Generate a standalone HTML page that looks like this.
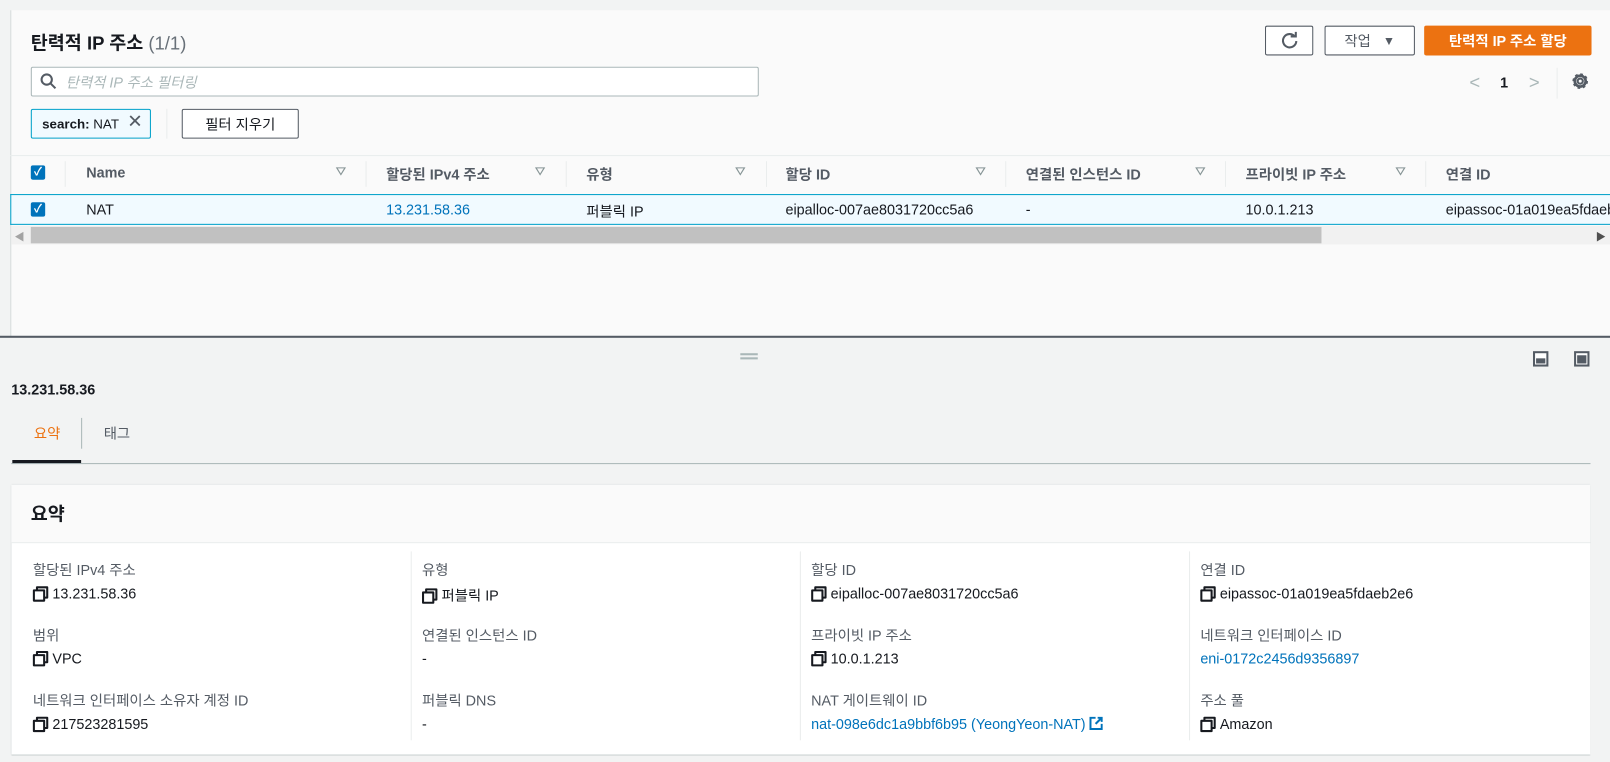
<!DOCTYPE html>
<html><head><meta charset="utf-8"><style>
*{box-sizing:border-box;margin:0;padding:0}
body{width:1610px;height:762px;background:#f2f3f3;font-family:"Liberation Sans","Noto Sans CJK KR",sans-serif;font-size:14px;color:#16191f;position:relative;overflow:hidden}
#w{position:absolute;left:0;top:0;width:1568px;height:742px;transform:scale(1.02679);transform-origin:0 0}
.a{position:absolute;white-space:nowrap}
.top{position:absolute;left:10px;top:10px;width:1558px;height:318px;background:#fafafa;border-left:1px solid #d5dbdb}
.btn{position:absolute;border:1px solid #545b64;border-radius:2px;background:#fff;font-size:14px;display:flex;align-items:center;justify-content:center;color:#545b64}
.hd{position:absolute;top:160px;font-weight:bold;color:#545b64;font-size:14px}
.sep{position:absolute;top:157px;width:1px;height:25px;background:#eaeded}
.tri{position:absolute;top:163px;width:0;height:0;border-left:5px solid transparent;border-right:5px solid transparent;border-top:8px solid #879596}
.tri:after{content:"";position:absolute;left:-3px;top:-7px;border-left:3px solid transparent;border-right:3px solid transparent;border-top:5px solid #fafafa}
.cb{position:absolute;width:14px;height:14px;background:#0073bb;border-radius:2px;color:#fff;font-size:11px;line-height:14px;text-align:center;font-weight:bold}
.lbl{position:absolute;color:#545b64;font-size:14px}
.val{position:absolute;font-size:14px;color:#16191f}
.lnk{color:#0073bb}
.cp{display:inline-block;width:13px;height:13px;position:relative;vertical-align:-1px;margin-right:6px}
.cp:before{content:"";position:absolute;left:3px;top:0;width:8px;height:8px;border:2px solid #16191f;border-radius:1px}
.cp:after{content:"";position:absolute;left:0;top:3px;width:8px;height:8px;border:2px solid #16191f;background:#fff;border-radius:1px}
</style></head><body><div id="w">
<div class="top"></div>
<div class="a" style="left:30px;top:28px;font-size:18px;font-weight:bold">탄력적 IP 주소 <span style="font-weight:normal;color:#687078">(1/1)</span></div>
<div class="btn" style="left:1232px;top:25px;width:47px;height:29px"><svg width="18" height="18" viewBox="0 0 18 18"><path d="M14 4.5A6.5 6.5 0 1 0 15.5 9" fill="none" stroke="#545b64" stroke-width="2"/><path d="M10 4.5h5v-5" fill="none" stroke="#545b64" stroke-width="2"/></svg></div>
<div class="btn" style="left:1290px;top:25px;width:88px;height:29px">작업&nbsp;&nbsp;&nbsp;<span style="font-size:12px;color:#545b64">▼</span></div>
<div class="btn" style="left:1387px;top:25px;width:163px;height:29px;background:#ec7211;border-color:#ec7211;color:#fff;font-weight:bold">탄력적 IP 주소 할당</div>
<div class="a" style="left:30px;top:65px;width:709px;height:29px;border:1px solid #aab7b8;background:#fff;border-radius:2px"></div>
<svg class="a" style="left:39px;top:71px" width="16" height="16" viewBox="0 0 16 16"><circle cx="6.5" cy="6.5" r="5" fill="none" stroke="#545b64" stroke-width="2"/><path d="M10 10l5 5" stroke="#545b64" stroke-width="2"/></svg>
<div class="a" style="left:64px;top:70px;color:#aab7b8;font-style:italic">탄력적 IP 주소 필터링</div>
<div class="a" style="left:1431px;top:70px;color:#aab7b8;font-size:18px">&lt;</div>
<div class="a" style="left:1461px;top:72px;font-weight:bold">1</div>
<div class="a" style="left:1489px;top:70px;color:#aab7b8;font-size:18px">&gt;</div>
<div class="a" style="left:1516px;top:66px;width:1px;height:30px;background:#eaeded"></div>
<svg class="a" style="left:1531px;top:71px" width="16" height="16" viewBox="0 0 16 16"><circle cx="8" cy="8" r="2.5" fill="none" stroke="#545b64" stroke-width="2"/><circle cx="8" cy="8" r="5.3" fill="none" stroke="#545b64" stroke-width="2.6"/><circle cx="8" cy="8" r="6.8" fill="none" stroke="#545b64" stroke-width="1.6" stroke-dasharray="2.7 2.6"/></svg>
<div class="a" style="left:30px;top:106px;width:117px;height:29px;border:1px solid #00a1c9;background:#f1faff;border-radius:2px;padding:6px 0 0 10px;font-size:13px"><b>search:</b> NAT <span style="font-size:18px;position:absolute;right:7px;top:1px;color:#545b64">✕</span></div>
<div class="a" style="left:162px;top:106px;width:1px;height:29px;background:#eaeded"></div>
<div class="btn" style="left:177px;top:106px;width:114px;height:29px;color:#16191f">필터 지우기</div>
<div class="a" style="left:10px;top:151px;width:1558px;height:1px;background:#eaeded"></div>
<div class="cb" style="left:30px;top:161px">✓</div>
<div class="sep" style="left:63px"></div>
<div class="hd" style="left:84px">Name</div><div class="tri" style="left:327px"></div><div class="sep" style="left:356px"></div>
<div class="hd" style="left:376px">할당된 IPv4 주소</div><div class="tri" style="left:521px"></div><div class="sep" style="left:551px"></div>
<div class="hd" style="left:571px">유형</div><div class="tri" style="left:716px"></div><div class="sep" style="left:746px"></div>
<div class="hd" style="left:765px">할당 ID</div><div class="tri" style="left:950px"></div><div class="sep" style="left:979px"></div>
<div class="hd" style="left:999px">연결된 인스턴스 ID</div><div class="tri" style="left:1164px"></div><div class="sep" style="left:1193px"></div>
<div class="hd" style="left:1213px">프라이빗 IP 주소</div><div class="tri" style="left:1359px"></div><div class="sep" style="left:1388px"></div>
<div class="hd" style="left:1408px">연결 ID</div>
<div class="a" style="left:10px;top:189px;width:1558px;height:30px;background:#f1faff;border:1px solid #00a1c9;border-right:none"></div>
<div class="cb" style="left:30px;top:197px">✓</div>
<div class="a" style="left:84px;top:196px">NAT</div>
<div class="a lnk" style="left:376px;top:196px">13.231.58.36</div>
<div class="a" style="left:571px;top:196px">퍼블릭 IP</div>
<div class="a" style="left:765px;top:196px">eipalloc-007ae8031720cc5a6</div>
<div class="a" style="left:999px;top:196px">-</div>
<div class="a" style="left:1213px;top:196px">10.0.1.213</div>
<div class="a" style="left:1408px;top:196px">eipassoc-01a019ea5fdaeb2e6</div>
<div class="a" style="left:11px;top:220px;width:1557px;height:18px;background:#f1f1f1"></div>
<div class="a" style="left:30px;top:221px;width:1257px;height:16px;background:#c1c1c1"></div>
<div class="a" style="left:14px;top:222px;font-size:10px;color:#a3a3a3">◀</div>
<div class="a" style="left:1554px;top:222px;font-size:10px;color:#505050">▶</div>
<div class="a" style="left:0;top:327px;width:1568px;height:2px;background:#545b64"></div>
<div class="a" style="left:721px;top:344px;width:17px;height:2px;background:#aab7b8"></div>
<div class="a" style="left:721px;top:348px;width:17px;height:2px;background:#aab7b8"></div>
<div class="a" style="left:1493px;top:342px;width:15px;height:15px;border:2px solid #545b64;background:#fff"><div style="position:absolute;left:1px;bottom:1px;width:9px;height:5px;background:#545b64"></div></div>
<div class="a" style="left:1533px;top:342px;width:15px;height:15px;border:2px solid #545b64;background:#fff"><div style="position:absolute;left:1px;bottom:1px;width:9px;height:8px;background:#545b64"></div></div>
<div class="a" style="left:11px;top:371px;font-weight:bold;font-size:14px">13.231.58.36</div>
<div class="a" style="left:33px;top:412px;color:#ec7211">요약</div>
<div class="a" style="left:79px;top:407px;width:1px;height:30px;background:#aab7b8"></div>
<div class="a" style="left:101px;top:412px;color:#545b64">태그</div>
<div class="a" style="left:11px;top:451px;width:1538px;height:1px;background:#aab7b8"></div>
<div class="a" style="left:12px;top:448px;width:67px;height:3px;background:#16191f"></div>
<div class="a" style="left:11px;top:472px;width:1538px;height:263px;background:#fff;box-shadow:0 1px 1px #879596,0 0 1px #aab7b8"></div>
<div class="a" style="left:11px;top:472px;width:1538px;height:57px;background:#fafafa;border-bottom:1px solid #eaeded"></div>
<div class="a" style="left:30px;top:487px;font-size:18px;font-weight:bold">요약</div>
<div class="a" style="left:400px;top:537px;width:1px;height:184px;background:#eaeded"></div>
<div class="a" style="left:779px;top:537px;width:1px;height:184px;background:#eaeded"></div>
<div class="a" style="left:1158px;top:537px;width:1px;height:184px;background:#eaeded"></div>
<div class="lbl" style="left:32px;top:545px">할당된 IPv4 주소</div><div class="val" style="left:32px;top:570px"><i class="cp"></i>13.231.58.36</div>
<div class="lbl" style="left:32px;top:609px">범위</div><div class="val" style="left:32px;top:633px"><i class="cp"></i>VPC</div>
<div class="lbl" style="left:32px;top:672px">네트워크 인터페이스 소유자 계정 ID</div><div class="val" style="left:32px;top:697px"><i class="cp"></i>217523281595</div>
<div class="lbl" style="left:411px;top:545px">유형</div><div class="val" style="left:411px;top:570px"><i class="cp"></i>퍼블릭 IP</div>
<div class="lbl" style="left:411px;top:609px">연결된 인스턴스 ID</div><div class="val" style="left:411px;top:633px">-</div>
<div class="lbl" style="left:411px;top:672px">퍼블릭 DNS</div><div class="val" style="left:411px;top:697px">-</div>
<div class="lbl" style="left:790px;top:545px">할당 ID</div><div class="val" style="left:790px;top:570px"><i class="cp"></i>eipalloc-007ae8031720cc5a6</div>
<div class="lbl" style="left:790px;top:609px">프라이빗 IP 주소</div><div class="val" style="left:790px;top:633px"><i class="cp"></i>10.0.1.213</div>
<div class="lbl" style="left:790px;top:672px">NAT 게이트웨이 ID</div><div class="val lnk" style="left:790px;top:697px">nat-098e6dc1a9bbf6b95 (YeongYeon-NAT) <svg width="13" height="13" viewBox="0 0 13 13" style="vertical-align:-1px"><path d="M6 1H1v11h11V7M8 1h4v4M12 1L6 7" fill="none" stroke="#0073bb" stroke-width="2"/></svg></div>
<div class="lbl" style="left:1169px;top:545px">연결 ID</div><div class="val" style="left:1169px;top:570px"><i class="cp"></i>eipassoc-01a019ea5fdaeb2e6</div>
<div class="lbl" style="left:1169px;top:609px">네트워크 인터페이스 ID</div><div class="val lnk" style="left:1169px;top:633px">eni-0172c2456d9356897</div>
<div class="lbl" style="left:1169px;top:672px">주소 풀</div><div class="val" style="left:1169px;top:697px"><i class="cp"></i>Amazon</div>
</div></body></html>
